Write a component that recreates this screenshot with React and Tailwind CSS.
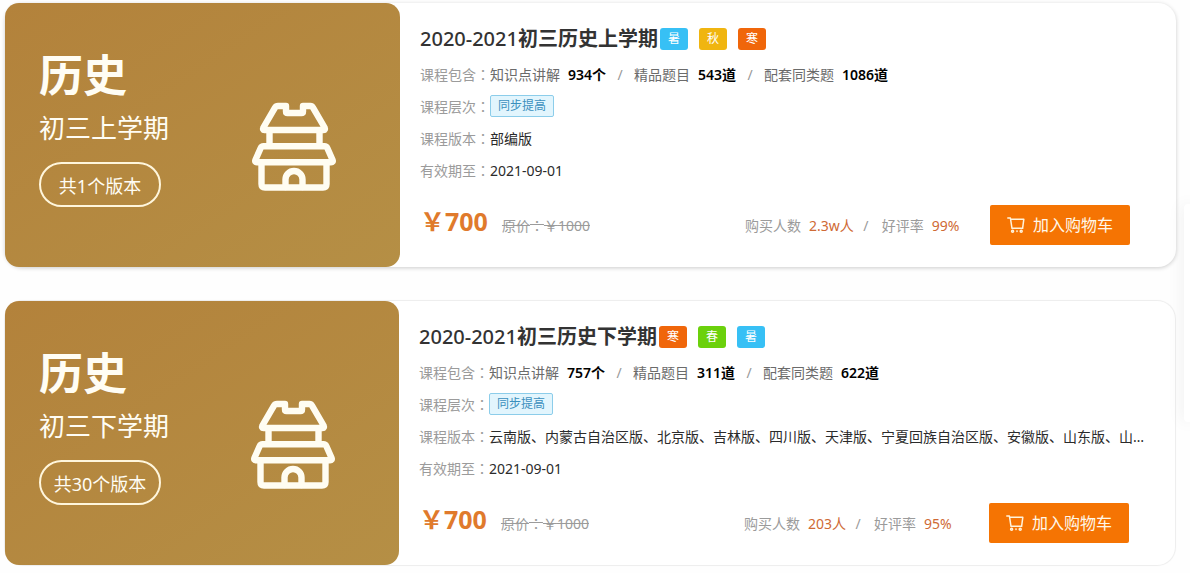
import React from "react";

const TAG_COLORS = {
  暑: "bg-[#37c0f5]",
  秋: "bg-[#f0b510]",
  寒: "bg-[#f0660a]",
  春: "bg-[#6bd10c]",
};

const COURSES = [
  {
    subject: "历史",
    term: "初三上学期",
    editions: "共1个版本",
    year: "2020-2021",
    title: "初三历史上学期",
    tags: ["暑", "秋", "寒"],
    counts: ["934个", "543道", "1086道"],
    level: "同步提高",
    version: "部编版",
    expires: "2021-09-01",
    price: "700",
    original: "1000",
    buyers: "2.3w人",
    rating: "99%",
    raised: true,
  },
  {
    subject: "历史",
    term: "初三下学期",
    editions: "共30个版本",
    year: "2020-2021",
    title: "初三历史下学期",
    tags: ["寒", "春", "暑"],
    counts: ["757个", "311道", "622道"],
    level: "同步提高",
    version:
      "云南版、内蒙古自治区版、北京版、吉林版、四川版、天津版、宁夏回族自治区版、安徽版、山东版、山西版、广东版、广西版",
    expires: "2021-09-01",
    price: "700",
    original: "1000",
    buyers: "203人",
    rating: "95%",
    raised: false,
  },
];

const COUNT_LABELS = ["知识点讲解", "精品题目", "配套同类题"];

function TempleIcon() {
  return (
    <svg
      viewBox="0 0 84 90"
      className="h-[90px] w-[84px] shrink-0"
      fill="none"
      stroke="#fffdf2"
      strokeWidth="6.4"
      strokeLinejoin="round"
      strokeLinecap="round"
      aria-hidden="true"
    >
      <path d="M26 4H34V9.500Q34 11 35.500 11H49.500Q51 11 51 9.500V4H58.500Q60 4 61 5.600L72.600 25.500Q73.600 28 71.500 28H12.500Q10.400 28 11.400 25.500L23 5.600Q24 4 26 4Z" />
      <path d="M17.500 28V44M67.500 28V44" strokeLinecap="butt" />
      <path d="M11.500 44.300H72.500Q74.500 44.300 75.300 46L80.600 58Q81.400 60.300 79 60.300H5Q2.600 60.300 3.400 58L8.700 46Q9.500 44.300 11.500 44.300Z" />
      <path d="M9.500 61V82Q9.500 85.500 13 85.500H71Q74.500 85.500 74.500 82V61" />
      <path d="M33.500 85V77.500A8.500 8.500 0 0 1 50.500 77.500V85" />
    </svg>
  );
}

function CartIcon() {
  return (
    <svg
      viewBox="0 0 18 16"
      className="h-4 w-[18px] shrink-0"
      fill="none"
      stroke="#fff3dc"
      strokeWidth="1.5"
      strokeLinecap="round"
      strokeLinejoin="round"
      aria-hidden="true"
    >
      <path d="M0.800 1H3.400L5 11.300H15.800M3.600 2.300H16.800L15.600 11.300" />
      <circle cx="5.600" cy="14.200" r="1" />
      <circle cx="10" cy="14.200" r="0.300" />
      <circle cx="14.200" cy="14.200" r="1" />
    </svg>
  );
}

function Colon() {
  return <span className="font-['Noto_Sans_CJK_TC',sans-serif]">：</span>;
}

function Field({ label, children }) {
  return (
    <div className="flex h-8 items-center">
      <dt className="shrink-0 text-[#9b9b9b]">
        {label}
        <Colon />
      </dt>
      <dd className="min-w-0 truncate text-[#2b2b2b]">{children}</dd>
    </div>
  );
}

function CourseCard({ course }) {
  return (
    <article
      className={
        course.raised
          ? "-mr-px flex rounded-[18px] bg-white shadow-[0_1px_4px_rgba(0,0,0,0.2)]"
          : "flex rounded-[18px] bg-white shadow-[0_0_1px_1px_rgba(0,0,0,0.07)]"
      }
    >
      <div
        className={
          (course.raised ? "w-[395px]" : "w-[394px]") +
          " flex shrink-0 items-center justify-between rounded-[14px] bg-linear-to-br from-[#b3823b] to-[#b58f45] pr-16 pl-[34px] text-[#fffdf4]"
        }
      >
        <div className="pb-4">
          <div className="text-[44px] leading-[54px] font-bold">{course.subject}</div>
          <div className="text-[26px] leading-[52px]">{course.term}</div>
          <div className="mt-2 flex h-[45px] w-[122px] items-center justify-center rounded-full border-2 border-[#fff6dc] pt-1 text-[18px]">
            {course.editions}
          </div>
        </div>
        <div className="pt-6">
          <TempleIcon />
        </div>
      </div>

      <div className="min-w-0 flex-1 pt-5 pr-[30px] pb-[22px] pl-5">
        <div className="flex h-8 items-center">
          <h2 className="text-[20px] text-[#333]">
            <span className="font-medium">{course.year}</span>
            <span className="font-bold">{course.title}</span>
          </h2>
          <ul className="ml-0.5 flex gap-[11px]">
            {course.tags.map((tag) => (
              <li
                key={tag}
                className={
                  TAG_COLORS[tag] +
                  " flex h-[22px] w-7 items-center justify-center rounded-[3px] text-[12px] text-white"
                }
              >
                {tag}
              </li>
            ))}
          </ul>
        </div>

        <dl className="mt-[3px] text-[14px]">
          <Field label="课程包含">
            {COUNT_LABELS.map((label, i) => (
              <React.Fragment key={label}>
                {i > 0 && (
                  <span className="inline-block w-7 text-center text-[#999]">/</span>
                )}
                <span className="text-[#6b6b6b]">{label}</span>
                <span className="ml-2 font-semibold text-black">{course.counts[i]}</span>
              </React.Fragment>
            ))}
          </Field>
          <Field label="课程层次">
            <span className="flex h-[22px] items-center rounded-[2px] border border-[#8ccdea] bg-[#e2f5fd] px-[7px] text-[12px] text-[#3a8fbd]">
              {course.level}
            </span>
          </Field>
          <Field label="课程版本">{course.version}</Field>
          <Field label="有效期至">{course.expires}</Field>
        </dl>

        <div className="mt-[19px] flex h-10 items-center pr-4">
          <div className="flex items-baseline pb-2">
            <strong className="text-[25px] leading-8 font-bold text-[#e07a2c]">
              ￥{course.price}
            </strong>
            <del className="ml-[14px] text-[14px] text-[#9b9b9b]">
              原价
              <Colon />￥{course.original}
            </del>
          </div>
          <div className="ml-auto w-[245px] shrink-0 text-[14px] text-[#9b9b9b]">
            购买人数
            <span className="ml-2 text-[#cf6a35]">{course.buyers}</span>
            <span className="inline-block w-7 pr-1 text-center">/</span>
            好评率
            <span className="ml-2 text-[#cf6a35]">{course.rating}</span>
          </div>
          <button
            type="button"
            className="flex h-10 w-[140px] shrink-0 items-center justify-center gap-2 rounded-[2px] bg-[#f57403] text-[16px] text-[#fff8ea]"
          >
            <CartIcon />
            加入购物车
          </button>
        </div>
      </div>
    </article>
  );
}

export default function App() {
  return (
    <main className="relative overflow-hidden bg-[#fefefe] pt-[3px] pr-[15px] pb-2 pl-[5px] font-['Noto_Sans','Noto_Sans_CJK_SC',sans-serif]">
      <div className="flex flex-col gap-[34px]">
        {COURSES.map((course) => (
          <CourseCard key={course.term} course={course} />
        ))}
      </div>
      <aside
        aria-hidden="true"
        className="absolute top-[204px] right-0 h-[218px] w-[6px] rounded-l-[4px] bg-white shadow-[0_0_16px_rgba(0,0,0,0.1)]"
      />
    </main>
  );
}
